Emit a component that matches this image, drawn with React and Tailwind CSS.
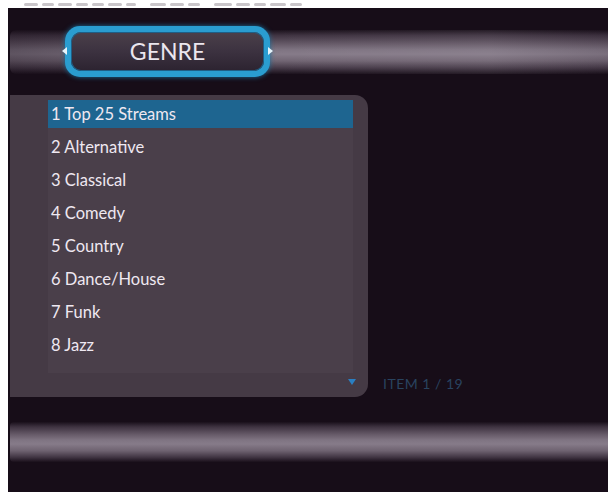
import React from "react";

const items = [
  "1 Top 25 Streams",
  "2 Alternative",
  "3 Classical",
  "4 Comedy",
  "5 Country",
  "6 Dance/House",
  "7 Funk",
  "8 Jazz",
];

const blobs = [14, 12, 14, 12, 12, 14, 10, 16, 14, 12, 18, 14, 12, 16, 12];

export default function App() {
  return (
    <div className="w-[609px] h-[492px] bg-white overflow-hidden flex flex-col" style={{ fontFamily: "Lato, 'Open Sans', sans-serif" }}>
      <div className="h-[8px] pl-[24px] flex items-end pb-[2px] gap-[4px]">
        {blobs.map((w, i) => (
          <div key={i} className={`h-[3px] rounded-full bg-[#c9c5c9] ${i === 7 || i === 10 ? "ml-[10px]" : ""}`} style={{ width: w }} />
        ))}
      </div>
      <div className="ml-[8px] w-[600px] h-[484px] bg-[#170d18] flex flex-col">
        {/* header */}
        <div className="relative mt-[18px] h-[51px]">
          <div className="absolute left-[2px] right-0 top-[4px] h-[44px] rounded-l-[6px] bg-[linear-gradient(to_bottom,#1a101b_0%,#3e3240_12%,#625664_30%,#7e7381_45%,#857a88_55%,#716573_70%,#463a48_86%,#1a101b_100%)]" />
          <div className="absolute left-[2px] right-0 top-[4px] h-[44px] bg-[linear-gradient(to_right,rgba(23,13,24,0.35)_0%,rgba(23,13,24,0)_40%,rgba(255,255,255,0.05)_80%,rgba(23,13,24,0.1)_100%)]" />
          <div className="relative ml-[57px] w-[205px] h-[51px] rounded-[15px] bg-[#2a9dd0] p-[6px] shadow-[0_0_5px_#1b6f9c]">
            <div className="w-full h-full rounded-[10px] bg-[linear-gradient(to_bottom,#4b404a_0%,#3c3240_50%,#2c2330_100%)] shadow-[inset_0_0_0_1px_#1f5f86] flex items-center justify-center">
              <span className="text-[23px] leading-none text-[#ebe6ee]" style={{ fontFamily: "Lato, sans-serif" }}>GENRE</span>
            </div>
            <div className="absolute left-[-3px] top-[21px] w-0 h-0 border-y-[4px] border-y-transparent border-r-[5px] border-r-[#e6f4fb]" />
            <div className="absolute right-[-3px] top-[21px] w-0 h-0 border-y-[4px] border-y-transparent border-l-[5px] border-l-[#e6f4fb]" />
          </div>
        </div>

        {/* panel row */}
        <div className="mt-[18px] flex items-end">
          <div className="ml-[2px] w-[358px] h-[302px] rounded-r-[13px] bg-[#453a45] flex flex-col">
            <div className="ml-[38px] mt-[5px] w-[305px] bg-[#4a3f4a] flex flex-col gap-[5px] pb-[14px]">
              {items.map((t, i) => (
                <div
                  key={t}
                  className={`h-[28px] flex items-center pl-[3px] text-[16.5px] text-[#efe8f1] ${i === 0 ? "bg-[#1e6590]" : ""}`}
                >
                  {t}
                </div>
              ))}
            </div>
            <div className="mt-auto mb-[12px] flex justify-end pr-[12px]">
              <div className="w-0 h-0 border-x-[4px] border-x-transparent border-t-[6px] border-t-[#2a7fc2]" />
            </div>
          </div>
          <div className="ml-[15px] mb-[5px] text-[14px] leading-[16px] text-[#29435f] tracking-[0.5px]">
            ITEM 1 / 19
          </div>
        </div>

        {/* bottom bar */}
        <div className="mt-[25px] ml-[2px] h-[40px] rounded-l-[4px] bg-[linear-gradient(to_bottom,#1a101b_0%,#3e3240_12%,#645866_30%,#7f7482_45%,#867b89_55%,#6e6270_72%,#413543_88%,#1a101b_100%)]" />
      </div>
    </div>
  );
}
